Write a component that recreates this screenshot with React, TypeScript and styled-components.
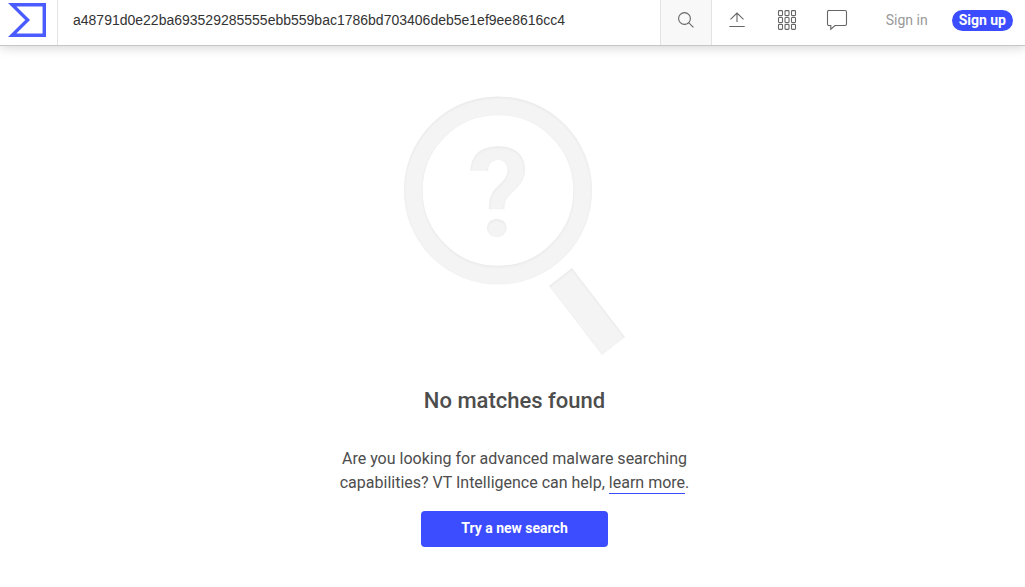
import React from 'react';
import styled, { createGlobalStyle } from 'styled-components';

const GlobalStyle = createGlobalStyle`
  *, *::before, *::after { box-sizing: border-box; }
  body {
    margin: 0;
    background: #fff;
    color: #4d4d4d;
    font-family: Roboto, "Liberation Sans", sans-serif;
    font-size: 16px;
    line-height: 24px;
  }
`;

const Header = styled.header`
  display: flex;
  align-items: stretch;
  height: 46px;
  background: #fff;
  border-bottom: 1px solid #c6c6c6;
  box-shadow: 0 2px 10px rgba(0, 0, 0, 0.16);
`;

const HomeLink = styled.a`
  display: flex;
  align-items: flex-start;
  padding: 3px 11px 0 8px;
  border-right: 1px solid #e3e3e3;
`;

const SearchForm = styled.form`
  display: flex;
  flex: 1;
  min-width: 0;
`;

const SearchInput = styled.input`
  flex: 1;
  min-width: 0;
  padding: 0 15px 5px;
  border: 0;
  outline: 0;
  background: transparent;
  color: #333;
  font-family: "Liberation Sans", Arial, sans-serif;
  font-size: 14px;
`;

const IconButton = styled.button<{ $filled?: boolean }>`
  display: flex;
  justify-content: center;
  width: ${(p) => (p.$filled ? 52 : 50)}px;
  padding: 8px 0 0;
  border: solid #e3e3e3;
  border-width: ${(p) => (p.$filled ? '0 1px' : '0')};
  background: ${(p) => (p.$filled ? '#f8f8f8' : 'transparent')};
  color: #666;
  cursor: pointer;
`;

const Account = styled.nav`
  display: flex;
  align-items: flex-start;
  gap: 24px;
  padding: 10px 12px 0 24px;
  font-size: 14px;
  line-height: 21px;
`;

const AccountLink = styled.a<{ $primary?: boolean }>`
  padding: ${(p) => (p.$primary ? '0 7px' : '0')};
  border-radius: 11px;
  background: ${(p) => (p.$primary ? '#3b4dff' : 'transparent')};
  color: ${(p) => (p.$primary ? '#fff' : '#999')};
  font-weight: ${(p) => (p.$primary ? 700 : 400)};
  text-decoration: none;
  white-space: nowrap;
`;

const Main = styled.main`
  display: flex;
  flex-direction: column;
  align-items: center;
  padding: 50px 0 40px 4px;
  text-align: center;
`;

const Title = styled.h1`
  margin: 29px 0 30px;
  font-size: 22px;
  line-height: 32px;
  font-weight: 500;
`;

const Message = styled.p`
  max-width: 368px;
  margin: 0 0 16px;
`;

const TextLink = styled.a`
  color: inherit;
  text-decoration: none;
  border-bottom: 1px solid #3b4dff;
  padding-bottom: 1px;
`;

const PrimaryButton = styled.button`
  height: 36px;
  min-width: 187px;
  padding: 0 16px 2px;
  border: 0;
  border-radius: 4px;
  background: #3b4dff;
  color: #fff;
  font-family: inherit;
  font-size: 14px;
  font-weight: 700;
  cursor: pointer;
`;

const Logo = () => (
  <svg width="38" height="34" viewBox="0 0 100 89" preserveAspectRatio="none" fill="#4a5cff" fillRule="evenodd" aria-hidden="true">
    <path d="M45.3 44.5 0 89h100V0H0l45.3 44.5zM91 80H22l36-35.2L22 9h69v71z" />
  </svg>
);

const Icon = ({ children }: { children: React.ReactNode }) => (
  <svg width="24" height="24" viewBox="0 0 24 24" fill="none" stroke="currentColor" strokeWidth="1.1" aria-hidden="true">
    {children}
  </svg>
);

const NoResultsArt = () => (
  <svg width="222" height="260" viewBox="404 96 222 260" fill="#f4f4f4" aria-hidden="true">
    <defs>
      <filter id="inset" x="-5%" y="-5%" width="110%" height="110%" colorInterpolationFilters="sRGB">
        <feComponentTransfer in="SourceAlpha" result="inverse">
          <feFuncA type="table" tableValues="1 0" />
        </feComponentTransfer>
        <feGaussianBlur in="inverse" stdDeviation="1.5" result="blur" />
        <feOffset in="blur" dy="1" result="moved" />
        <feComposite in="moved" in2="SourceAlpha" operator="in" result="edge" />
        <feComponentTransfer in="edge" result="shade">
          <feFuncR type="linear" slope="0" />
          <feFuncG type="linear" slope="0" />
          <feFuncB type="linear" slope="0" />
          <feFuncA type="linear" slope="0.06" />
        </feComponentTransfer>
        <feMerge>
          <feMergeNode in="SourceGraphic" />
          <feMergeNode in="shade" />
        </feMerge>
      </filter>
    </defs>
    <g filter="url(#inset)">
      <circle cx="498" cy="190.5" r="84.7" fill="none" stroke="#f4f4f4" strokeWidth="18.8" />
      <path d="M549 286 572 268 625 337 602 355z" />
      <text x="498.5" y="236" textAnchor="middle" fontFamily="Roboto, sans-serif" fontWeight="700" fontSize="124">?</text>
    </g>
  </svg>
);

export default function App() {
  return (
    <>
      <GlobalStyle />
      <Header>
        <HomeLink href="#" aria-label="Home"><Logo /></HomeLink>
        <SearchForm role="search" onSubmit={(e) => e.preventDefault()}>
          <SearchInput
            type="text"
            aria-label="Search"
            defaultValue="a48791d0e22ba693529285555ebb559bac1786bd703406deb5e1ef9ee8616cc4"
          />
          <IconButton $filled type="submit" aria-label="Search">
            <Icon><circle cx="10.5" cy="10.5" r="5.9" /><path d="M14.6 14.6 19.4 19.4" /></Icon>
          </IconButton>
        </SearchForm>
        <IconButton type="button" aria-label="Upload">
          <Icon><path d="M4.3 18.5h15.4M12 14V5.2M5.5 11.3 12 5l6.5 6.3" /></Icon>
        </IconButton>
        <IconButton type="button" aria-label="Apps">
          <Icon>
            {[2.6, 9.5, 16.4].map((y) =>
              [3.5, 10, 16.5].map((x) => <rect key={`${x}-${y}`} x={x} y={y} width="4" height="5" rx="0.8" />)
            )}
          </Icon>
        </IconButton>
        <IconButton type="button" aria-label="Comments">
          <Icon>
            <path d="M4.5 2.5h15.5a1.5 1.5 0 0 1 1.5 1.5v12a1.5 1.5 0 0 1-1.5 1.5H10L5.8 21.2V17.5H4.5A1.5 1.5 0 0 1 2.5 16V4A1.5 1.5 0 0 1 4.5 2.5z" />
          </Icon>
        </IconButton>
        <Account>
          <AccountLink href="#">Sign in</AccountLink>
          <AccountLink $primary href="#">Sign up</AccountLink>
        </Account>
      </Header>
      <Main>
        <NoResultsArt />
        <Title>No matches found</Title>
        <Message>
          Are you looking for advanced malware searching capabilities? VT Intelligence can help,{' '}
          <TextLink href="#">learn more</TextLink>.
        </Message>
        <PrimaryButton type="button">Try a new search</PrimaryButton>
      </Main>
    </>
  );
}
